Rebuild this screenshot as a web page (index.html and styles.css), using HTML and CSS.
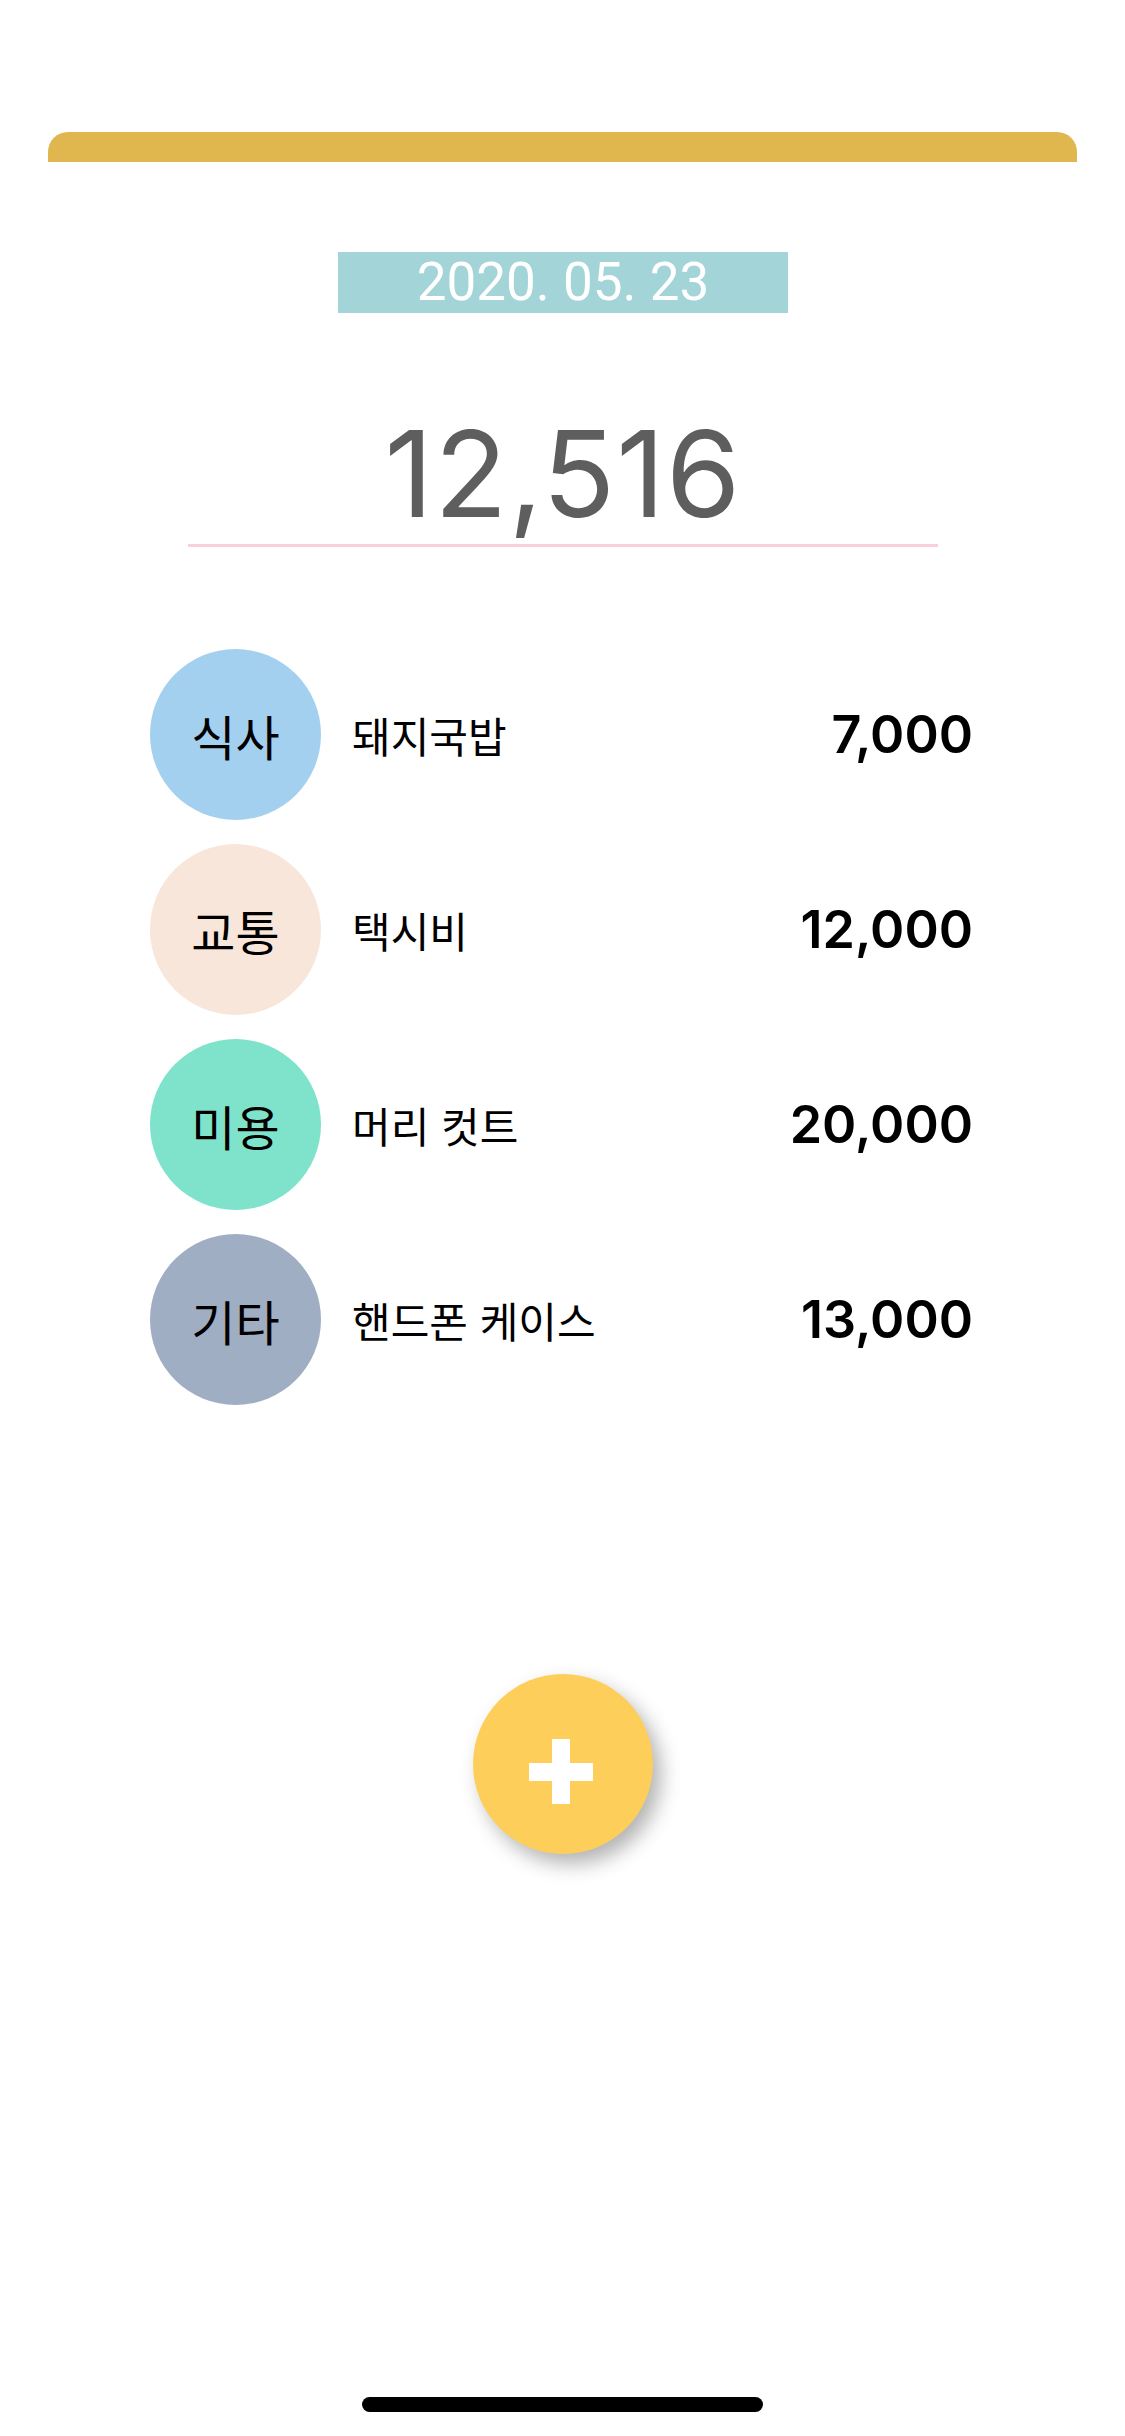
FILE: index.html
```html
<!DOCTYPE html>
<html lang="ko">
<head>
<meta charset="utf-8">
<title>가계부</title>
<link rel="stylesheet" href="styles.css">
</head>
<body>
<div class="screen">
  <div class="topbar"></div>
  <div class="date">2020. 05. 23</div>
  <div class="total"><span class="total-num">12,516</span></div>
  <ul class="list">
    <li class="row">
      <span class="cat cat-food">식사</span>
      <span class="name">돼지국밥</span>
      <span class="amount">7,000</span>
    </li>
    <li class="row">
      <span class="cat cat-traffic">교통</span>
      <span class="name">택시비</span>
      <span class="amount">12,000</span>
    </li>
    <li class="row">
      <span class="cat cat-beauty">미용</span>
      <span class="name">머리 컷트</span>
      <span class="amount">20,000</span>
    </li>
    <li class="row">
      <span class="cat cat-etc">기타</span>
      <span class="name">핸드폰 케이스</span>
      <span class="amount">13,000</span>
    </li>
  </ul>
  <div class="fab-wrap">
    <button class="fab" aria-label="추가">
      <svg width="64" height="65" viewBox="0 0 64 65"><rect x="23" y="0" width="18" height="65" fill="#fff"/><rect x="0" y="24" width="64" height="18" fill="#fff"/></svg>
    </button>
  </div>
  <div class="home-indicator"></div>
</div>
</body>
</html>
```

FILE: styles.css
```css
html, body {
  margin: 0;
  padding: 0;
  background: #ffffff;
}
.screen {
  width: 1125px;
  height: 2436px;
  overflow: hidden;
  display: flex;
  flex-direction: column;
  align-items: center;
  padding-top: 132px;
  box-sizing: border-box;
  font-family: "Noto Sans CJK KR", "Noto Sans", sans-serif;
}
.topbar {
  align-self: stretch;
  margin: 0 48px;
  height: 30px;
  background: #e0b64f;
  border-radius: 20px 20px 0 0;
}
.date {
  margin-top: 90px;
  width: 450px;
  height: 61px;
  line-height: 61px;
  background: #a3d4d8;
  color: #ffffff;
  text-align: center;
  font-family: Roboto, "Liberation Sans", sans-serif;
  font-size: 53px;
  margin-left: 1px;
}
.total {
  margin-top: 101px;
  width: 750px;
  padding-bottom: 10px;
  border-bottom: 3px solid #f9cfda;
  text-align: center;
  margin-left: 1px;
}
.total-num {
  display: block;
  font-family: Inter, Roboto, sans-serif;
  font-weight: 400;
  font-size: 120px;
  line-height: 120px;
  letter-spacing: 1px;
  color: #5e5e5e;
}
.list {
  list-style: none;
  margin: 102px 0 0 0;
  padding: 0 152px 0 150px;
  align-self: stretch;
  display: flex;
  flex-direction: column;
  gap: 24px;
}
.row {
  display: flex;
  align-items: center;
  height: 171px;
}
.cat {
  width: 171px;
  height: 171px;
  border-radius: 50%;
  display: flex;
  align-items: center;
  justify-content: center;
  font-size: 48px;
  color: #000;
  flex-shrink: 0;
}
.cat-food { background: #a4d0f0; }
.cat-traffic { background: #f9e6da; }
.cat-beauty { background: #7fe3cc; }
.cat-etc { background: #a0aec4; }
.name {
  margin-left: 31px;
  font-size: 42px;
  color: #000;
  flex: 1;
}
.amount {
  font-family: Inter, Roboto, sans-serif;
  font-weight: 600;
  font-size: 52px;
  color: #000;
}
.fab-wrap {
  margin-top: 269px;
  display: flex;
  justify-content: center;
}
.fab {
  width: 180px;
  height: 180px;
  border-radius: 50%;
  border: none;
  padding: 0;
  background: #fdcf5a;
  box-shadow: 8px 10px 20px rgba(0, 0, 0, 0.3);
  display: flex;
  align-items: center;
  justify-content: center;
  margin-left: 1px;
}
.fab svg {
  margin-top: 14px;
  margin-left: -4px;
}
.home-indicator {
  margin-top: 543px;
  width: 401px;
  height: 15px;
  border-radius: 8px;
  background: #000;
}
```
